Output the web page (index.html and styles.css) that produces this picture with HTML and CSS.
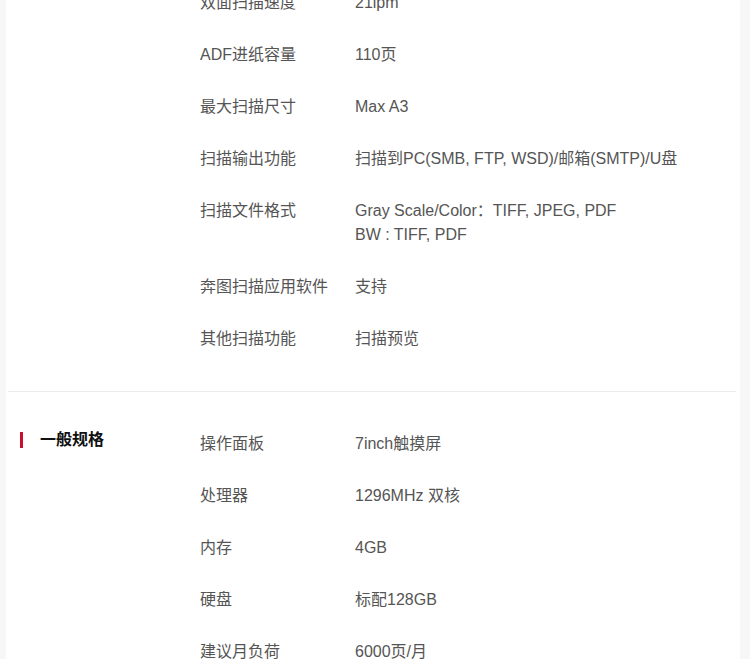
FILE: index.html
```html
<!DOCTYPE html>
<html lang="zh-CN">
<head>
    <meta charset="UTF-8">
    <meta name="viewport" content="width=device-width, initial-scale=1.0">
    <title>产品规格</title>
    <link rel="stylesheet" href="styles.css">
</head>
<body>

<div class="page">
    <div class="spec-card">

        <section class="spec-section scan">
            <div class="spec-head"></div>
            <ul class="spec-list">
                <li class="spec-row"><span class="spec-label">双面扫描速度</span><span class="spec-value">21ipm</span></li>
                <li class="spec-row"><span class="spec-label">ADF进纸容量</span><span class="spec-value">110页</span></li>
                <li class="spec-row"><span class="spec-label">最大扫描尺寸</span><span class="spec-value">Max A3</span></li>
                <li class="spec-row"><span class="spec-label">扫描输出功能</span><span class="spec-value">扫描到PC(SMB, FTP, WSD)/邮箱(SMTP)/U盘</span></li>
                <li class="spec-row"><span class="spec-label">扫描文件格式</span><span class="spec-value">Gray Scale/Color：TIFF, JPEG, PDF<br>BW : TIFF, PDF</span></li>
                <li class="spec-row"><span class="spec-label">奔图扫描应用软件</span><span class="spec-value">支持</span></li>
                <li class="spec-row"><span class="spec-label">其他扫描功能</span><span class="spec-value">扫描预览</span></li>
            </ul>
        </section>

        <section class="spec-section">
            <div class="spec-head">
                <h2 class="spec-title">一般规格</h2>
            </div>
            <ul class="spec-list">
                <li class="spec-row"><span class="spec-label">操作面板</span><span class="spec-value">7inch触摸屏</span></li>
                <li class="spec-row"><span class="spec-label">处理器</span><span class="spec-value">1296MHz 双核</span></li>
                <li class="spec-row"><span class="spec-label">内存</span><span class="spec-value">4GB</span></li>
                <li class="spec-row"><span class="spec-label">硬盘</span><span class="spec-value">标配128GB</span></li>
                <li class="spec-row"><span class="spec-label">建议月负荷</span><span class="spec-value">6000页/月</span></li>
            </ul>
        </section>

    </div>
</div>

</body>
</html>
```

FILE: styles.css
```css
body {
    font-family: "Liberation Sans", Arial, "Noto Sans CJK SC", sans-serif;
    margin: 0;
    padding: 0;
    background-color: #f7f7f7;
}

.page {
    padding: 0 10px 0 6px;
    height: 659px;
    overflow: hidden;
}

/* page is scrolled a little, first row sits under the top edge */
.spec-card {
    background-color: #ffffff;
    margin-top: -9px;
    padding: 0 4px 0 2px;
}

.spec-section {
    display: flex;
    align-items: flex-start;
    padding: 40px 0 12px;
    border-bottom: 1px solid #ececec;
}

.spec-section.scan {
    padding-top: 0;
}

.spec-head {
    width: 192px;
    flex-shrink: 0;
    padding-left: 12px;
    box-sizing: border-box;
}

.spec-title {
    margin: 0;
    padding-left: 17px;
    border-left: 3px solid #c8102e;
    font-size: 16px;
    line-height: 16px;
    font-weight: bold;
    color: #111111;
}

.spec-list {
    list-style: none;
    margin: 0;
    padding: 0;
    flex: 1;
}

.spec-row {
    display: flex;
    font-size: 16px;
    line-height: 24px;
    color: #555555;
    margin-bottom: 28px;
}

.spec-label {
    width: 155px;
    flex-shrink: 0;
}

.spec-value {
    flex: 1;
}
```
